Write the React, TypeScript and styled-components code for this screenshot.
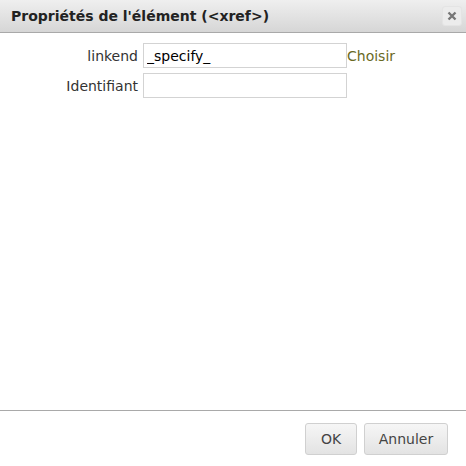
import styled, { createGlobalStyle } from "styled-components";

const GlobalStyle = createGlobalStyle`
  html, body {
    margin: 0;
    padding: 0;
    background: #ffffff;
  }
  body {
    font-family: "DejaVu Sans", Tahoma, sans-serif;
  }
`;

const Dialog = styled.div`
  width: 466px;
  height: 466px;
  display: flex;
  flex-direction: column;
  background: #ffffff;
  box-sizing: border-box;
`;

const TitleBar = styled.div`
  height: 32px;
  flex: none;
  display: flex;
  align-items: center;
  justify-content: space-between;
  padding: 0 4px 0 11px;
  background: linear-gradient(to bottom, #efefef, #d6d6d6);
  border-bottom: 1px solid #a9a9a9;
`;

const Title = styled.span`
  font-family: "DejaVu Sans", Tahoma, sans-serif;
  font-weight: bold;
  font-size: 14px;
  color: #222222;
`;

const CloseButton = styled.button`
  width: 20px;
  height: 20px;
  padding: 0;
  display: flex;
  align-items: center;
  justify-content: center;
  border: 1px solid #e4e4e4;
  border-radius: 3px;
  background: #ececec;
  cursor: pointer;
`;

const Body = styled.div`
  flex: 1;
  padding: 10px 0 0 0;
`;

const Form = styled.div`
  display: grid;
  grid-template-columns: 138px 204px auto;
  column-gap: 5px;
  row-gap: 5px;
  align-items: center;
  justify-content: start;
`;

const Label = styled.label`
  justify-self: end;
  font-size: 14px;
  color: #333333;
`;

const Input = styled.input`
  height: 25px;
  box-sizing: border-box;
  margin: 0;
  padding: 0 3px;
  border: 1px solid #d3d3d3;
  font-family: "DejaVu Sans", Tahoma, sans-serif;
  font-size: 14px;
  color: #000000;
  outline: none;
`;

const LinkAction = styled.a`
  font-size: 14px;
  color: #6a6a1f;
  margin-left: -5px;
  cursor: pointer;
`;

const Footer = styled.div`
  flex: none;
  height: 55px;
  border-top: 1px solid #a9a9a9;
  display: flex;
  align-items: center;
  justify-content: flex-end;
  gap: 7px;
  padding: 0 18px 0 0;
`;

const Button = styled.button<{ wide?: boolean }>`
  height: 32px;
  min-width: ${({ wide }) => (wide ? "84px" : "52px")};
  padding: 0 10px;
  border: 1px solid #d0d0d0;
  border-radius: 3px;
  background: linear-gradient(to bottom, #f6f6f6, #e3e3e3);
  font-family: "DejaVu Sans", Tahoma, sans-serif;
  font-size: 14px;
  color: #444444;
  cursor: pointer;
`;

const App = () => {
  return (
    <>
      <GlobalStyle />
      <Dialog>
        <TitleBar>
          <Title>Propriétés de l'élément (&lt;xref&gt;)</Title>
          <CloseButton aria-label="Fermer">
            <svg width="10" height="10" viewBox="0 0 10 10">
              <path d="M1.5 1.5 L8.5 8.5 M8.5 1.5 L1.5 8.5" stroke="#777" strokeWidth="2.4" />
            </svg>
          </CloseButton>
        </TitleBar>
        <Body>
          <Form>
            <Label>linkend</Label>
            <Input defaultValue="_specify_" />
            <LinkAction>Choisir</LinkAction>
            <Label>Identifiant</Label>
            <Input defaultValue="" />
            <span />
          </Form>
        </Body>
        <Footer>
          <Button>OK</Button>
          <Button wide>Annuler</Button>
        </Footer>
      </Dialog>
    </>
  );
};

export default App;
